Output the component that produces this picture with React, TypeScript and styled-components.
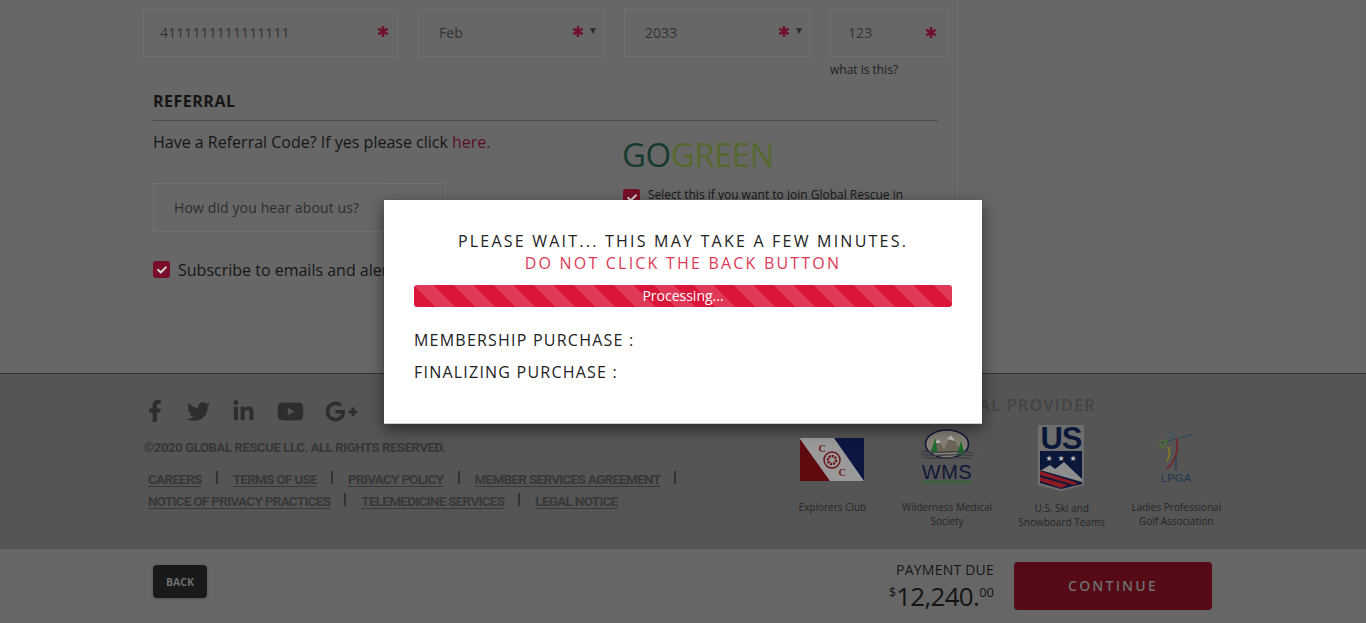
import React from "react";
import styled, { createGlobalStyle } from "styled-components";
import { FaFacebookF, FaTwitter, FaLinkedinIn, FaYoutube, FaGooglePlusG, FaCheck } from "react-icons/fa";

const Global = createGlobalStyle`
  html, body { margin: 0; padding: 0; height: 623px; overflow: hidden; background: #676767; }
  body { font-family: "Open Sans", "Liberation Sans", sans-serif; color: #161616; }
`;

const Page = styled.div`
  width: 1366px; height: 623px; overflow: hidden; position: relative;
  display: flex; flex-direction: column;
`;
const Main = styled.main`
  height: 373px; flex: none; padding-left: 143px; overflow: hidden;
`;
const Column = styled.div`
  width: 815px; height: 373px; border-right: 1px solid #707070; padding-top: 9px; box-sizing: border-box;
`;
const CardRow = styled.div`
  display: grid; grid-template-columns: 255px 186px 186px 118px; column-gap: 20px;
`;
const Field = styled.div`
  height: 48px; box-sizing: border-box; border: 1px solid #707070; display: flex; align-items: center;
  padding: 0 8px 2px 16px; font-size: 14px; color: #333; letter-spacing: .1px;
`;
const FieldValue = styled.span<{ $inset?: number }>`
  flex: 1; padding-left: ${(p) => p.$inset ?? 0}px;
`;
const Star = styled.span<{ $dy?: number; $mr?: number }>`
  color: #6e0f2c; font-size: 15px; line-height: 14px; height: 14px; font-weight: 700;
  font-family: "DejaVu Sans", sans-serif; margin-top: ${(p) => p.$dy ?? 0}px; margin-right: ${(p) => p.$mr ?? 0}px;
  width: 10px; display: flex; justify-content: center;
`;
const Caret = styled.span`
  width: 0; height: 0; border-left: 3px solid transparent; border-right: 3px solid transparent;
  border-top: 6px solid #2e2e2e; margin-left: 7px; margin-top: -3px; margin-right: -1px;
`;
const CvvCell = styled.div`display: flex; flex-direction: column;`;
const Hint = styled.div`font-size: 12px; line-height: 14px; margin-top: 6px; color: #202020;`;

const Referral = styled.section`
  margin: 14px 19px 0 10px;
`;
const SectionTitle = styled.h2`
  margin: 0; font-size: 16px; line-height: 20px; font-weight: 700; letter-spacing: .5px; color: #151515;
  padding-bottom: 9px; border-bottom: 1px solid #4d4d4d;
`;
const TwoCols = styled.div`display: grid; grid-template-columns: 470px 1fr;`;
const Intro = styled.p`
  margin: 10px 0 0; font-size: 16px; line-height: 22px; color: #161616; white-space: nowrap;
`;
const Here = styled.span`color: #5a0f2a;`;
const SelectBox = styled.div`
  margin-top: 30px; width: 293px; height: 49px; box-sizing: border-box; border: 1px solid #707070;
  display: flex; align-items: center; padding-left: 20px; font-size: 14px; letter-spacing: .12px; color: #2e2e2e;
`;
const CheckRow = styled.label<{ $top: number; $size: number }>`
  display: flex; align-items: flex-start; gap: 8px; margin-top: ${(p) => p.$top}px; font-size: ${(p) => p.$size}px;
  line-height: ${(p) => p.$size + 6}px; color: #161616; white-space: nowrap;
`;
const Box = styled.span`
  width: 17px; height: 17px; flex: none; border-radius: 3px; background: #780e29; color: #d9d9d9;
  display: flex; align-items: center; justify-content: center; font-size: 10px; margin-top: 2px;
`;
const SmallLabel = styled.span`margin-top: -1px; white-space: normal; width: 280px;`;
const GoGreen = styled.div`
  margin: 14px 0 0 -1px; font-size: 33px; line-height: 40px; font-weight: 400; color: #55692f; letter-spacing: -.5px;
`;
const Go = styled.span`color: #163a30;`;

const Footer = styled.footer`
  height: 176px; flex: none; box-sizing: border-box; background: #555; border-top: 1px solid #333;
  display: flex; color: #353535; overflow: hidden;
`;
const FootLeft = styled.div`width: 775px; padding: 25px 0 0 144px; box-sizing: border-box; flex: none;`;
const Socials = styled.div`
  display: flex; align-items: center; height: 24px; color: #2e2e2e;
`;
const Social = styled.span<{ $w: number; $size: number }>`
  width: ${(p) => p.$w}px; flex: none; font-size: ${(p) => p.$size}px; display: flex; align-items: center;
`;
const Copy = styled.div`
  margin-top: 16px; font-family: Roboto, sans-serif; font-weight: 700; font-size: 13px; line-height: 18px;
  letter-spacing: -.35px; color: #363636; white-space: nowrap;
`;
const LinkRows = styled.div`margin-top: 11px; padding-left: 4px;`;
const LinkRow = styled.div`display: flex; height: 22px; align-items: center;`;
const FootLink = styled.a`
  font-family: Roboto, sans-serif; font-weight: 700; font-size: 13.5px; line-height: 16px; color: #383838;
  letter-spacing: -.72px; text-decoration: underline; text-underline-offset: 2px; white-space: nowrap;
`;
const Sep = styled.span`
  width: 2px; height: 13px; background: #333; margin: -4px 15px 0 14px; flex: none;
`;
const FootRight = styled.div`padding-top: 21px; box-sizing: border-box; width: 460px; flex: none;`;
const ProviderTitle = styled.div`
  font-size: 16px; line-height: 20px; font-weight: 600; letter-spacing: 1.35px; color: #444; white-space: nowrap; text-align: right;
  width: 321px;
`;
const Partners = styled.div`
  display: grid; grid-template-columns: repeat(4, 114.67px); margin-top: 5px;
`;
const Partner = styled.div`display: flex; flex-direction: column; align-items: center;`;
const LogoSlot = styled.div`height: 76px; display: flex; align-items: center; justify-content: center;`;
const Caption = styled.div<{ $dy?: number }>`
  font-size: 10px; line-height: 14px; text-align: center; color: #262626; margin-top: ${(p) => 4 + (p.$dy ?? 0)}px; width: 100px;
`;

const Bar = styled.div`
  flex: 1; background: #666; display: flex; align-items: flex-start; padding: 0 154px 0 153px;
`;
const BackButton = styled.button`
  width: 54px; height: 33px; margin-top: 16px; border: 0; border-radius: 4px; background: #191919; color: #6e6e6e;
  font: 700 10.5px "Open Sans", sans-serif; padding: 0; box-shadow: 0 1px 3px rgba(0,0,0,.2);
`;
const Spacer = styled.div`flex: 1;`;
const Due = styled.div`text-align: right; margin-top: 11px; margin-right: 20px;`;
const DueLabel = styled.div`font-size: 14px; line-height: 20px; color: #161616; letter-spacing: .22px;`;
const Amount = styled.div`font-size: 26px; line-height: 30px; color: #141414; letter-spacing: -.7px; margin-top: 1px;`;
const Sup = styled.sup`font-size: 13px; line-height: 0; vertical-align: 9px; letter-spacing: 0;`;
const Continue = styled.button`
  width: 198px; height: 48px; margin-top: 13px; border: 0; border-radius: 4px; background: #550a16; color: #6e6e6e;
  font: 600 14px "Open Sans", sans-serif; letter-spacing: 2.2px; padding: 0 0 2px;
`;

const Overlay = styled.div`
  position: absolute; inset: 0; display: flex; align-items: flex-start; justify-content: center; padding-top: 200px; box-sizing: border-box;
`;
const Modal = styled.div`
  width: 598px; height: 224px; box-sizing: border-box; background: #fff; padding: 30px 30px 0;
  border-bottom: 1px solid #ccc; box-shadow: 0 5px 15px rgba(0,0,0,.5);
`;
const Wait = styled.div`
  text-align: center; font-size: 16px; line-height: 22px; letter-spacing: 2.22px; color: #222;
`;
const Warn = styled(Wait)`color: #dd3a58; font-weight: 500; letter-spacing: 2.2px;`;
const Progress = styled.div`
  margin-top: 11px; height: 22px; border-radius: 3px; color: #fff; text-align: center; font-size: 14px; line-height: 22px;
  background-color: #d9163a;
  background-image: linear-gradient(45deg, rgba(255,255,255,.15) 25%, transparent 25%, transparent 50%, rgba(255,255,255,.15) 50%, rgba(255,255,255,.15) 75%, transparent 75%, transparent);
  background-size: 40px 40px; font-weight: 500;
`;
const Status = styled.div<{ $top: number }>`
  margin-top: ${(p) => p.$top}px; font-size: 16px; line-height: 22px; letter-spacing: 1.22px; color: #222;
`;

const FlagLogo = () => (
  <svg width="64" height="43" viewBox="0 0 64 43" style={{ marginTop: 2 }}>
    <rect width="64" height="43" fill="#9a9a9a" />
    <path d="M0 1V43H30Z" fill="#5f0a0f" />
    <path d="M34 0H64V43Z" fill="#0d1640" />
    <circle cx="32" cy="22" r="8" fill="none" stroke="#6d1418" strokeWidth="1.5" />
    <circle cx="32" cy="22" r="4" fill="none" stroke="#6d1418" strokeWidth="2.5" strokeDasharray="2 1" />
    <text x="22" y="14" fontSize="10" fontWeight="700" fill="#6d1418" fontFamily="Liberation Serif, serif" textAnchor="middle">C</text>
    <text x="42" y="38" fontSize="10" fontWeight="700" fill="#6d1418" fontFamily="Liberation Serif, serif" textAnchor="middle">C</text>
  </svg>
);
const WmsLogo = () => (
  <svg width="58" height="56" viewBox="0 0 58 56" style={{ marginTop: -3 }}>
    <ellipse cx="29" cy="15" rx="21.5" ry="14" fill="#868076" stroke="#10173a" strokeWidth="1.6" />
    <path d="M11 23 L20 10 L26 20 L33 6 L44 23Z" fill="#6c6658" />
    <path d="M29 10 L33 6 L37 12 L33 11Z M17 14 L20 10 L23 14Z" fill="#b9b9b9" />
    <path d="M13 24 L17 9 L20 24Z M39 25 L43 12 L47 25Z" fill="#1f6b2c" />
    <path d="M3 22 C18 26 38 20 55 24 M3 25 C18 29 38 23 55 27 M5 28 C20 32 38 26 53 30" stroke="#3d3f47" strokeWidth="1.4" fill="none" />
    <text x="29" y="50" fontSize="20" fontWeight="400" fill="#10173a" fontFamily="Liberation Sans, sans-serif" textAnchor="middle" letterSpacing=".5">WMS</text>
    <rect x="4" y="52" width="50" height="1.6" fill="#2c6a2c" />
  </svg>
);
const UsLogo = () => (
  <svg width="48" height="66" viewBox="0 0 48 66" overflow="visible" style={{ marginTop: -1 }}>
    <path d="M0 0H46V60L23 66L0 60Z" fill="#6e6e6e" />
    <text x="23" y="24" fontSize="31" fontWeight="700" fill="#0b1738" fontFamily="Liberation Sans, sans-serif" textAnchor="middle" letterSpacing="-1">US</text>
    <path d="M2 26H44V59L23 64L2 58Z" fill="#0b1738" />
    <text x="11" y="36" fontSize="8" fill="#bdbdbd" textAnchor="middle" fontFamily="DejaVu Sans">★</text>
    <text x="23" y="36" fontSize="8" fill="#bdbdbd" textAnchor="middle" fontFamily="DejaVu Sans">★</text>
    <text x="35" y="36" fontSize="8" fill="#bdbdbd" textAnchor="middle" fontFamily="DejaVu Sans">★</text>
    <path d="M2 46L12 40L17 44L26 37L44 54V57L2 45Z" fill="#8d8d8d" />
    <path d="M2 46L40 58L36 60L2 50Z M2 52L30 60L23 63L2 56Z" fill="#8a1a24" />
  </svg>
);
const LpgaLogo = () => (
  <svg width="42" height="54" viewBox="0 0 42 54" style={{ marginTop: -5 }}>
    <path d="M6 14 L38 5" stroke="#2a4a55" strokeWidth="1.2" fill="none" />
    <path d="M12 6 C15 2 19 3 19 7 L14 10" stroke="#2d5568" strokeWidth="1" fill="none" />
    <path d="M4 13 L12 11 L8 19Z" stroke="#4c7a2c" strokeWidth="1.2" fill="none" />
    <path d="M21 9 C24 18 22 30 12 40" stroke="#7a1c24" strokeWidth="1.4" fill="none" />
    <path d="M13 18 C16 24 14 28 12 32" stroke="#8a7a20" strokeWidth="1.6" fill="none" />
    <path d="M21 28 L21 41" stroke="#23414f" strokeWidth="1.4" fill="none" />
    <text x="21" y="53" fontSize="11" fill="#1e3850" fontFamily="Liberation Sans, sans-serif" textAnchor="middle" letterSpacing=".3">LPGA</text>
  </svg>
);

const partners = [
  { name: "Explorers Club", logo: <FlagLogo />, dy: 0 },
  { name: "Wilderness Medical Society", logo: <WmsLogo />, dy: 0 },
  { name: "U.S. Ski and Snowboard Teams", logo: <UsLogo />, dy: 1 },
  { name: "Ladies Professional Golf Association", logo: <LpgaLogo />, dy: 0 },
];

export default function App() {
  return (
    <Page>
      <Global />
      <Main>
        <Column>
          <CardRow>
            <Field><FieldValue>4111111111111111</FieldValue><Star $mr={1}>✱</Star></Field>
            <Field><FieldValue $inset={4}>Feb</FieldValue><Star>✱</Star><Caret /></Field>
            <Field><FieldValue $inset={4}>2033</FieldValue><Star>✱</Star><Caret /></Field>
            <CvvCell>
              <Field><FieldValue $inset={1}>123</FieldValue><Star $dy={2} $mr={3}>✱</Star></Field>
              <Hint>what is this?</Hint>
            </CvvCell>
          </CardRow>
          <Referral>
            <SectionTitle>REFERRAL</SectionTitle>
            <TwoCols>
              <div>
                <Intro>Have a Referral Code? If yes please click <Here>here.</Here></Intro>
                <SelectBox>How did you hear about us?</SelectBox>
                <CheckRow $top={27} $size={16}><Box><FaCheck /></Box>Subscribe to emails and alerts</CheckRow>
              </div>
              <div>
                <GoGreen><Go>GO</Go>GREEN</GoGreen>
                <CheckRow $top={12} $size={12}>
                  <Box><FaCheck /></Box>
                  <SmallLabel>Select this if you want to join Global Rescue in reducing paper waste.</SmallLabel>
                </CheckRow>
              </div>
            </TwoCols>
          </Referral>
        </Column>
      </Main>
      <Footer>
        <FootLeft>
          <Socials>
            <Social $w={43} $size={22}><FaFacebookF /></Social>
            <Social $w={45} $size={23}><FaTwitter /></Social>
            <Social $w={45} $size={23}><FaLinkedinIn /></Social>
            <Social $w={48} $size={27}><FaYoutube /></Social>
            <Social $w={40} $size={33}><FaGooglePlusG /></Social>
          </Socials>
          <Copy>©2020 GLOBAL RESCUE LLC. ALL RIGHTS RESERVED.</Copy>
          <LinkRows>
            <LinkRow>
              <FootLink>CAREERS</FootLink><Sep />
              <FootLink>TERMS OF USE</FootLink><Sep />
              <FootLink>PRIVACY POLICY</FootLink><Sep />
              <FootLink>MEMBER SERVICES AGREEMENT</FootLink><Sep />
            </LinkRow>
            <LinkRow>
              <FootLink>NOTICE OF PRIVACY PRACTICES</FootLink><Sep />
              <FootLink>TELEMEDICINE SERVICES</FootLink><Sep />
              <FootLink>LEGAL NOTICE</FootLink>
            </LinkRow>
          </LinkRows>
        </FootLeft>
        <FootRight>
          <ProviderTitle>OFFICIAL MEDICAL PROVIDER</ProviderTitle>
          <Partners>
            {partners.map((p) => (
              <Partner key={p.name}>
                <LogoSlot>{p.logo}</LogoSlot>
                <Caption $dy={p.dy}>{p.name}</Caption>
              </Partner>
            ))}
          </Partners>
        </FootRight>
      </Footer>
      <Bar>
        <BackButton>BACK</BackButton>
        <Spacer />
        <Due>
          <DueLabel>PAYMENT DUE</DueLabel>
          <Amount><Sup>$</Sup>12,240.<Sup>00</Sup></Amount>
        </Due>
        <Continue>CONTINUE</Continue>
      </Bar>
      <Overlay>
        <Modal>
          <Wait>PLEASE WAIT... THIS MAY TAKE A FEW MINUTES.</Wait>
          <Warn>DO NOT CLICK THE BACK BUTTON</Warn>
          <Progress>Processing...</Progress>
          <Status $top={22}>MEMBERSHIP PURCHASE :</Status>
          <Status $top={10}>FINALIZING PURCHASE :</Status>
        </Modal>
      </Overlay>
    </Page>
  );
}
